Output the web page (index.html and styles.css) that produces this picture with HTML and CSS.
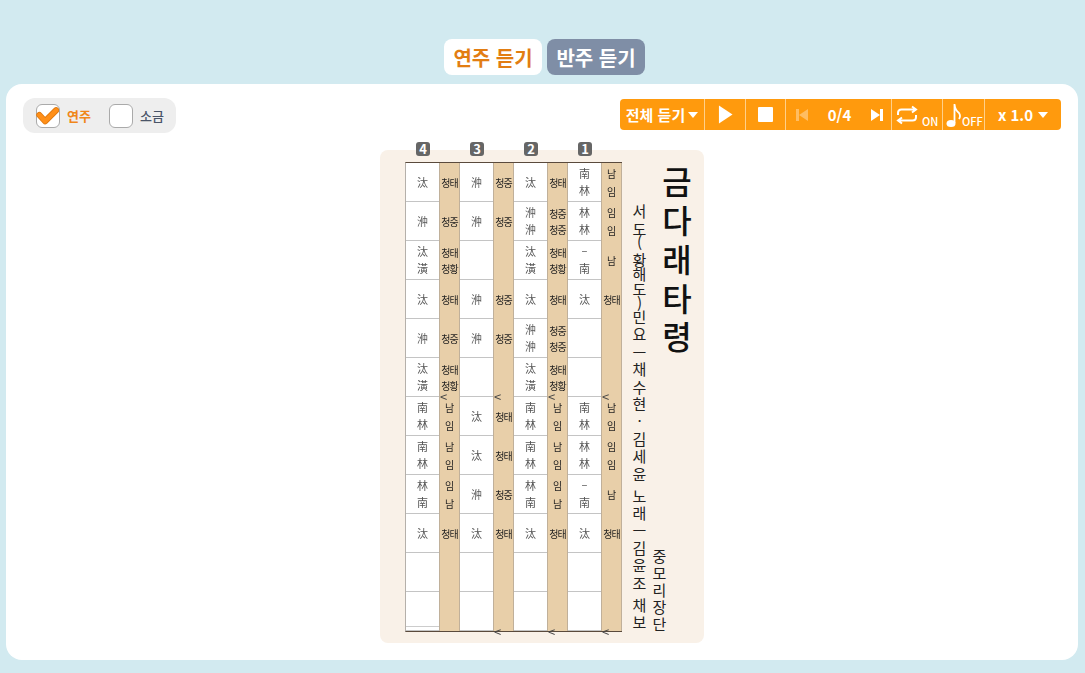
FILE: index.html
```html
<!DOCTYPE html>
<html lang="ko">
<head>
<meta charset="utf-8">
<title>금다래타령</title>
<link rel="stylesheet" href="styles.css">
</head>
<body>
<nav class="tabs">
  <button class="tab tab-on">연주 듣기</button>
  <button class="tab tab-off">반주 듣기</button>
</nav>
<main class="card">
  <div class="toolbar">
    <div class="checks">
      <label class="check check-on">
        <span class="box"><svg viewBox="0 0 24 24" class="tick"><path d="M3.5 11.5 L9.5 18 L21 6.5" fill="none" stroke="#e07a10" stroke-width="6.4" stroke-linecap="round" stroke-linejoin="round"/><path d="M3.5 11.5 L9.5 18 L21 6.5" fill="none" stroke="#ff8f17" stroke-width="4.6" stroke-linecap="round" stroke-linejoin="round"/></svg></span>
        <span>연주</span>
      </label>
      <label class="check">
        <span class="box"></span>
        <span>소금</span>
      </label>
    </div>
    <div class="player">
      <div class="seg seg-all"><span>전체 듣기</span><i class="caret"></i></div>
      <div class="seg seg-play"><svg width="15" height="19" viewBox="0 0 16 20"><path d="M1 0.5 L15.5 10 L1 19.5Z" fill="#fff"/></svg></div>
      <div class="seg seg-stop"><i class="stop"></i></div>
      <div class="seg seg-pos">
        <svg width="13" height="14" viewBox="0 0 13 14" class="dim"><path d="M2.5 1V13" stroke="#fff" stroke-width="3"/><path d="M13 1V13L4 7Z" fill="#fff"/></svg>
        <span>0/4</span>
        <svg width="13" height="14" viewBox="0 0 13 14"><path d="M10.5 1V13" stroke="#fff" stroke-width="3"/><path d="M0 1V13L9 7Z" fill="#fff"/></svg>
      </div>
      <div class="seg seg-toggle"><svg width="22" height="20" viewBox="0 0 22 20"><path d="M2 10V8Q2 4.5 5.5 4.5H19M16 1.5 20 4.5 16 7.5" fill="none" stroke="#fff" stroke-width="2"/><path d="M20 10V12Q20 15.500 16.500 15.500H3M6 12.500 2 15.500 6 18.500" fill="none" stroke="#fff" stroke-width="2"/></svg><small>ON</small></div>
      <div class="seg seg-toggle"><svg width="15" height="26" viewBox="0 0 15 26"><ellipse cx="5" cy="21.500" rx="4.500" ry="3.500" fill="#fff"/><path d="M8.500 21V2Q9 8 13 11Q15 14 13 17" fill="none" stroke="#fff" stroke-width="1.800"/></svg><small>OFF</small></div>
      <div class="seg seg-speed"><span>x 1.0</span><i class="caret"></i></div>
    </div>
  </div>

  <section class="sheet">
    <div class="sheet-body">
      <div class="numbers">
        <b>4</b><b>3</b><b>2</b><b>1</b>
      </div>
      <div class="score">
        <div class="w">汰</div><div class="t">청태</div><div class="w">㳞</div><div class="t">청중</div><div class="w">汰</div><div class="t">청태</div><div class="w">南<br>林</div><div class="t big">남<br>임</div>
        <div class="w">㳞</div><div class="t">청중</div><div class="w">㳞</div><div class="t">청중</div><div class="w">㳞<br>㳞</div><div class="t">청중<br>청중</div><div class="w">林<br>林</div><div class="t big">임<br>임</div>
        <div class="w">汰<br>潢</div><div class="t">청태<br>청황</div><div class="w"></div><div class="t"></div><div class="w">汰<br>潢</div><div class="t">청태<br>청황</div><div class="w">–<br>南</div><div class="t big">남</div>
        <div class="w">汰</div><div class="t">청태</div><div class="w">㳞</div><div class="t">청중</div><div class="w">汰</div><div class="t">청태</div><div class="w">汰</div><div class="t">청태</div>
        <div class="w">㳞</div><div class="t">청중</div><div class="w">㳞</div><div class="t">청중</div><div class="w">㳞<br>㳞</div><div class="t">청중<br>청중</div><div class="w"></div><div class="t"></div>
        <div class="w">汰<br>潢</div><div class="t">청태<br>청황</div><div class="w"></div><div class="t"></div><div class="w">汰<br>潢</div><div class="t">청태<br>청황</div><div class="w"></div><div class="t"></div>
        <div class="w">南<br>林</div><div class="t big"><i class="mark">&lt;</i>남<br>임</div><div class="w">汰</div><div class="t"><i class="mark">&lt;</i>청태</div><div class="w">南<br>林</div><div class="t big"><i class="mark">&lt;</i>남<br>임</div><div class="w">南<br>林</div><div class="t big"><i class="mark">&lt;</i>남<br>임</div>
        <div class="w">南<br>林</div><div class="t big">남<br>임</div><div class="w">汰</div><div class="t">청태</div><div class="w">南<br>林</div><div class="t big">남<br>임</div><div class="w">林<br>林</div><div class="t big">임<br>임</div>
        <div class="w">林<br>南</div><div class="t big">임<br>남</div><div class="w">㳞</div><div class="t">청중</div><div class="w">林<br>南</div><div class="t big">임<br>남</div><div class="w">–<br>南</div><div class="t big">남</div>
        <div class="w">汰</div><div class="t">청태</div><div class="w">汰</div><div class="t">청태</div><div class="w">汰</div><div class="t">청태</div><div class="w">汰</div><div class="t">청태</div>
        <div class="w"></div><div class="t"></div><div class="w"></div><div class="t"></div><div class="w"></div><div class="t"></div><div class="w"></div><div class="t"></div>
        <div class="w w-end"></div><div class="t"></div><div class="w"></div><div class="t"><i class="mark mark-end">&lt;</i></div><div class="w"></div><div class="t"><i class="mark mark-end">&lt;</i></div><div class="w"></div><div class="t"><i class="mark mark-end">&lt;</i></div>
      </div>
    </div>
    <div class="credit">서<span class="lead">도</span><span class="open">(</span><span class="tight">황해도)</span>민요ㅡ채수현·김세윤 노래ㅡ김윤조 채보</div>
    <div class="heading">
      <h1 class="title">금다래타령</h1>
      <div class="jangdan">중모리장단</div>
    </div>
  </section>
</main>
</body>
</html>
```
FILE: styles.css
```css
* { box-sizing: border-box; }
html, body { margin: 0; height: 100%; }
body {
  background: #d2eaf0;
  font-family: "Noto Sans CJK KR", "Noto Sans", sans-serif;
  overflow: hidden;
}
.tabs {
  display: flex;
  justify-content: center;
  gap: 5px;
  padding: 39px 0 0 4px;
  height: 84px;
}
.tab {
  width: 98px;
  height: 36px;
  border: 0;
  border-radius: 8px;
  font: 700 20px "Noto Sans CJK KR", sans-serif;
  padding: 0;
}
.tab-on { background: #fff; color: #e27d12; }
.tab-off { background: #7f8ea6; color: #fff; }
.card {
  width: 1072px;
  height: 576px;
  margin-left: 6px;
  background: #fff;
  border-radius: 16px;
  padding: 14px 17px 0;
}
.toolbar {
  display: flex;
  justify-content: space-between;
  align-items: flex-start;
  height: 52px;
}
.checks {
  display: flex;
  gap: 18px;
  width: 153px;
  height: 35px;
  padding: 6px 13px;
  background: #eeeeee;
  border-radius: 12px;
}
.check {
  display: flex;
  align-items: center;
  gap: 7px;
  font-size: 13px;
  font-weight: 500;
  color: #4a5568;
  white-space: nowrap;
}
.check-on { color: #f0861a; font-weight: 700; }
.box {
  position: relative;
  width: 24px;
  height: 24px;
  flex: none;
  background: #fff;
  border: 1.500px solid #aaa;
  border-radius: 6px;
}
.tick {
  position: absolute;
  left: -1px;
  top: -1px;
  width: 23px;
  height: 23px;
}
.player {
  display: flex;
  width: 441px;
  height: 31px;
  margin-top: 1px;
  background: #ff9a0d;
  border-radius: 4px;
  color: #fff;
  font-weight: 700;
}
.seg {
  display: flex;
  align-items: center;
  justify-content: center;
  height: 100%;
  border-right: 1px solid #ffd08a;
}
.seg:last-child { border-right: 0; }
.seg-all { width: 85px; gap: 3px; font-size: 15px; white-space: nowrap; }
.seg-play { width: 41px; }
.seg-stop { width: 40px; }
.seg-pos { width: 106px; justify-content: space-between; padding: 0 7px 0 9px; font-size: 15px; }
.seg-toggle { width: 51px; justify-content: flex-start; padding-left: 4px; }
.seg-toggle + .seg-toggle { width: 42px; padding-left: 3px; }
.seg-toggle small { font-size: 11px; font-weight: 500; align-self: flex-end; margin: 0 0 1px 4px; }
.seg-toggle + .seg-toggle small { margin-left: 1px; }
.seg-speed { flex: 1; gap: 5px; font-size: 15px; }
.caret {
  width: 0;
  height: 0;
  border: 5.500px solid transparent;
  border-top: 6px solid #fff;
  border-bottom: 0;
}
.stop { width: 15px; height: 15px; background: #fff; border-radius: 1px; }
.dim { opacity: 0.35; }
.sheet {
  display: flex;
  width: 324px;
  height: 493px;
  margin: 0 auto;
  padding-left: 25px;
  background: #f9f1e8;
  border-radius: 8px;
}
.sheet-body { width: 217px; margin-top: -8px; }
.numbers {
  display: grid;
  grid-template-columns: repeat(4, 54px);
  height: 20px;
  padding-left: 1px;
}
.numbers b {
  justify-self: start;
  width: 14px;
  height: 14px;
  margin-left: 10px;
  background: #666;
  border-radius: 3px;
  color: #fff;
  font-size: 13px;
  line-height: 14px;
  text-align: center;
}
.score {
  display: grid;
  grid-template-columns: repeat(4, 33px 21px);
  grid-template-rows: repeat(12, 1fr);
  width: 217px;
  height: 470px;
  border-top: 1px solid #5a4a3c;
  border-bottom: 1px solid #5a4a3c;
  border-left: 1px solid #b5b0aa;
  will-change: opacity;
}
.w, .t {
  display: flex;
  align-items: center;
  justify-content: center;
  text-align: center;
}
.w {
  background: #fff;
  border-bottom: 1px solid #c4c4c4;
  color: #555;
  font-size: 11px;
  line-height: 17px;
}
.w-end { box-shadow: inset 0 -3px 0 #fff, inset 0 -4px 0 #ccc; }
.t {
  position: relative;
  background: #e8cfa9;
  border-left: 1px solid #c0b09a;
  border-right: 1px solid #c0b09a;
  color: #1f1f1f;
  font-size: 10px;
  font-weight: 400;
  letter-spacing: -1px;
  line-height: 16px;
  white-space: nowrap;
}
.big { letter-spacing: 0; line-height: 18px; }
.mark {
  position: absolute;
  left: 0;
  top: -4px;
  font-style: normal;
  font-size: 13px;
  letter-spacing: 0;
  line-height: 8px;
  color: #444;
  font-weight: 400;
}
.mark-end { top: auto; bottom: -5px; }
.credit {
  writing-mode: vertical-rl;
  text-orientation: upright;
  width: 18px;
  height: 430px;
  margin: 54px 0 0 8px;
  font-size: 15px;
  line-height: 18px;
  letter-spacing: 2.400px;
  word-spacing: -12.800px;
  color: #222;
  white-space: nowrap;
}
.lead { letter-spacing: -1.500px; }
.open { letter-spacing: 3px; }
.tight { letter-spacing: -0.800px; }
.heading {
  display: flex;
  flex-direction: column;
  justify-content: space-between;
  flex: 1;
  height: 468px;
  margin-top: 16px;
  padding-left: 2px;
}
.title {
  align-self: flex-end;
  margin: 0 9px 0 0;
  writing-mode: vertical-rl;
  text-orientation: upright;
  font-size: 32px;
  line-height: 36px;
  font-weight: 500;
  letter-spacing: 6.800px;
  color: #111;
}
.jangdan {
  writing-mode: vertical-rl;
  text-orientation: upright;
  width: 18px;
  font-size: 15px;
  line-height: 18px;
  letter-spacing: 2px;
  color: #222;
}
```
